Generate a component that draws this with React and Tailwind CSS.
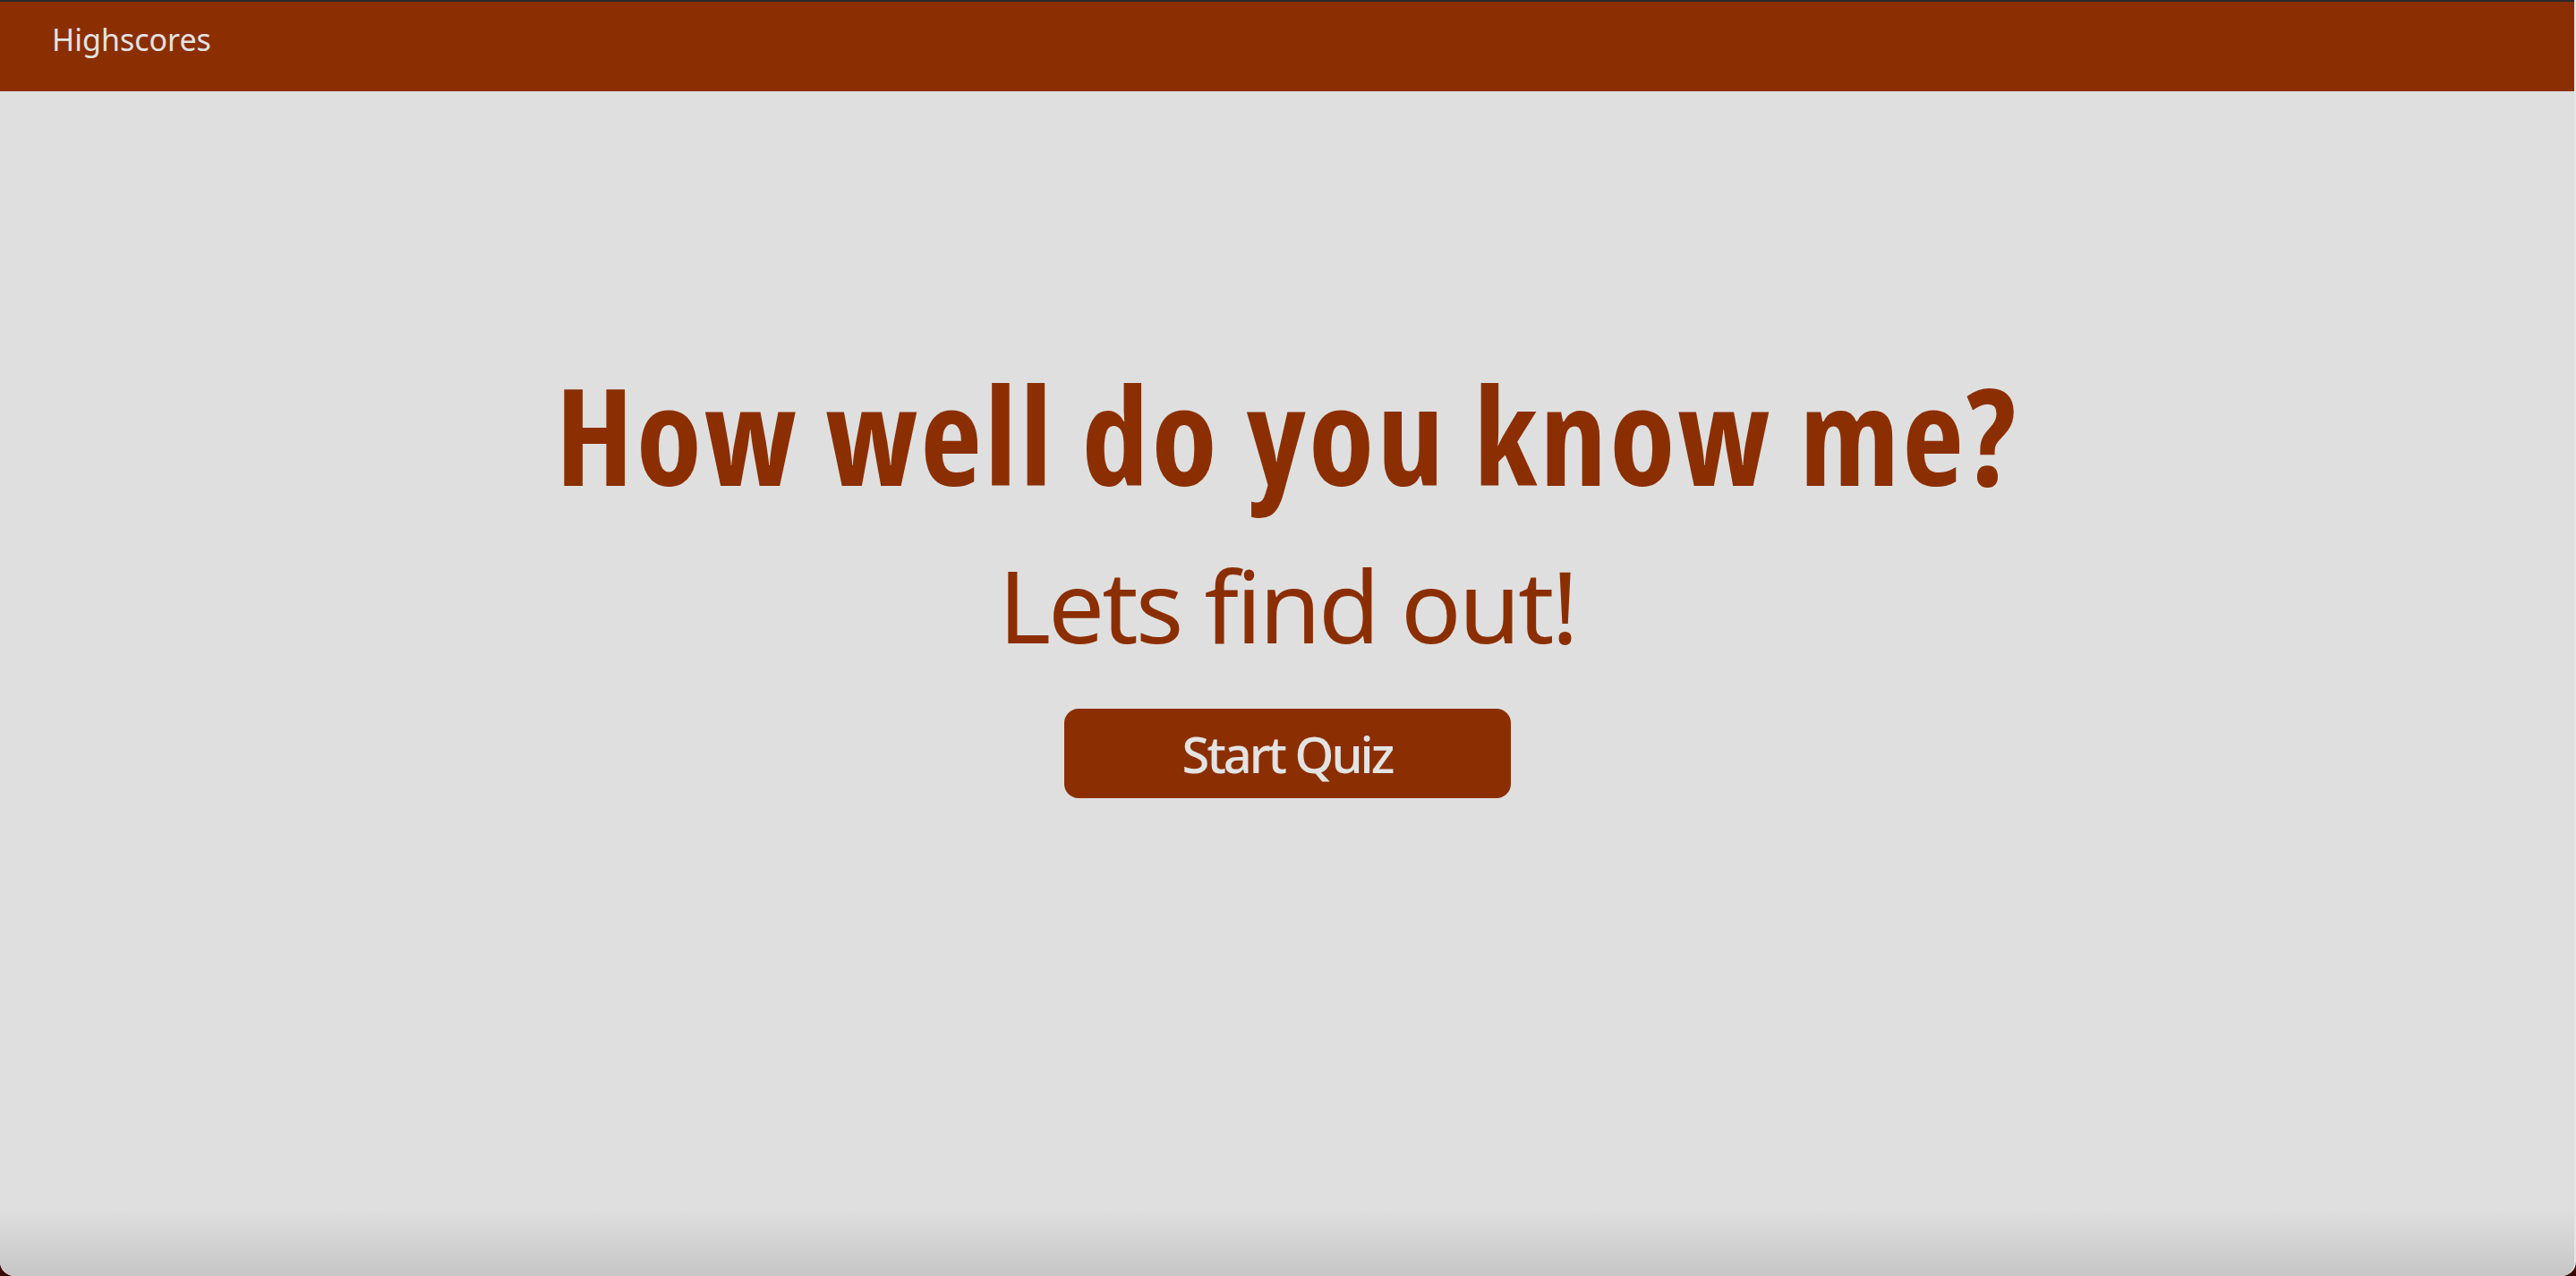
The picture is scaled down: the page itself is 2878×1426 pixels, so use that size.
const font = { fontFamily: '"Noto Sans", "Open Sans", sans-serif' };

function Header() {
  return (
    <header className="h-[102px] shrink-0 border-t-2 border-[#2a2a2a] bg-[#8b2f03] flex items-center pl-[58px]">
      <a href="#" className="text-[34px] leading-none text-[#e3e3e3] -mt-[16px]">
        Highscores
      </a>
    </header>
  );
}

export default function App() {
  return (
    <div className="min-h-screen bg-[#3b0a06] flex flex-col" style={font}>
      <div className="flex-1 flex flex-col bg-[#dfdfdf] rounded-b-[16px] overflow-hidden border-r-2 border-[#e9e9e9]/60">
        <Header />
        <main className="flex-1 flex flex-col items-center pt-[308px]">
          <h1 className="text-[150px] leading-none font-bold font-stretch-condensed tracking-[3px] font-['Open_Sans',sans-serif] text-[#8b2f03] whitespace-nowrap">
            How well do you know me?
          </h1>
          <h2 className="mt-[60px] text-[112px] leading-none tracking-[-3px] text-[#8b2f03] whitespace-nowrap">
            Lets find out!
          </h2>
          <button className="mt-[60px] w-[499px] h-[100px] rounded-[16px] bg-[#8b2f03] text-[56px] leading-none font-medium tracking-[-3px] text-[#e3e3e3]">
            Start Quiz
          </button>
        </main>
        <div className="h-[76px] shrink-0 bg-gradient-to-b from-[#dfdfdf] to-[#c6c6c6]" />
      </div>
    </div>
  );
}
